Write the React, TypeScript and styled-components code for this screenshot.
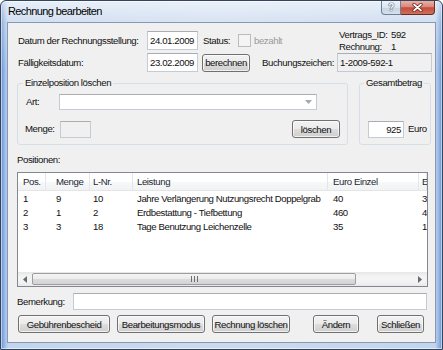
import styled, { createGlobalStyle } from "styled-components";

const GlobalStyle = createGlobalStyle`
  html, body {
    margin: 0;
    padding: 0;
    background: #ffffff;
  }
  body {
    font-family: "Liberation Sans", Arial, sans-serif;
  }
`;

const Window = styled.div`
  width: 443px;
  height: 350px;
  box-sizing: border-box;
  border: 1px solid #34445d;
  border-radius: 6px 6px 0 0;
  box-shadow: inset 0 0 0 1px rgba(255, 255, 255, 0.55);
  background:
    linear-gradient(to bottom, rgba(255, 255, 255, 0.6) 0, rgba(255, 255, 255, 0.25) 21px, rgba(255, 255, 255, 0) 70px),
    linear-gradient(to right, #5b8ed4 0, #92b4e1 3px, #c3d5ed 7px, #cbdbef 50%, #c3d5ed calc(100% - 7px), #92b4e1 calc(100% - 3px), #5b8ed4 100%);
  display: flex;
  flex-direction: column;
  overflow: hidden;
  font-size: 9.6px;
  letter-spacing: -0.4px;
  color: #111;
`;

const TitleBar = styled.div`
  height: 21px;
  display: flex;
  align-items: flex-start;
  padding: 0 7px 0 7px;
`;

const Title = styled.div`
  font-size: 11px;
  letter-spacing: -0.6px;
  line-height: 21px;
  color: #000;
`;

const CaptionButtons = styled.div`
  margin-left: auto;
  display: flex;
`;

const HelpButton = styled.div`
  width: 20px;
  height: 14px;
  box-sizing: border-box;
  border: 1px solid #6f7f96;
  border-top: none;
  border-radius: 0 0 0 4px;
  background: linear-gradient(to bottom, #eef3fa 0, #dbe4f0 50%, #c6d3e4 51%, #d6e0ec 100%);
  display: flex;
  align-items: center;
  justify-content: center;
  font-weight: bold;
  font-size: 10px;
  color: #ffffff;
  text-shadow: 0 0 1px #44546b, 0 0 1px #44546b, 0 0 1px #44546b;
`;

const CloseButton = styled.div`
  width: 34px;
  height: 14px;
  box-sizing: border-box;
  border: 1px solid #6a2c26;
  border-top: none;
  border-left: none;
  border-radius: 0 0 4px 0;
  background: linear-gradient(to bottom, #e9b2a6 0, #d9877a 45%, #c64b3b 52%, #d0705a 100%);
  display: flex;
  align-items: center;
  justify-content: center;
`;

const Client = styled.div`
  margin: 0 6px 6px 6px;
  flex: 1;
  box-sizing: border-box;
  border: 1px solid #8799b2;
  background: #f0f0f0;
  padding: 8px 3px 0 9px;
  display: flex;
  flex-direction: column;
`;

const FormRow = styled.div<{ $top?: number }>`
  display: flex;
  align-items: center;
  height: 19px;
  padding-left: 1px;
  margin-top: ${(p) => p.$top ?? 0}px;
`;

const Label = styled.div<{ $width?: number; $left?: number; $disabled?: boolean }>`
  width: ${(p) => (p.$width ? `${p.$width}px` : "auto")};
  margin-left: ${(p) => p.$left ?? 0}px;
  flex-shrink: 0;
  white-space: nowrap;
  line-height: 12px;
  color: ${(p) => (p.$disabled ? "#9a9a9a" : "inherit")};
`;

const TextBox = styled.div<{ $width: number; $height?: number; $gray?: boolean; $right?: boolean }>`
  width: ${(p) => p.$width}px;
  height: ${(p) => p.$height ?? 19}px;
  box-sizing: border-box;
  flex-shrink: 0;
  border: 1px solid #c5cbd4;
  border-top-color: #abadb3;
  background: ${(p) => (p.$gray ? "#f0f0f0" : "#ffffff")};
  padding: 0 2px;
  display: flex;
  align-items: center;
  justify-content: ${(p) => (p.$right ? "flex-end" : "flex-start")};
  white-space: nowrap;
  overflow: hidden;
`;

const Button = styled.div<{ $width: number; $left?: number }>`
  width: ${(p) => p.$width}px;
  height: 18px;
  margin-left: ${(p) => p.$left ?? 0}px;
  box-sizing: border-box;
  flex-shrink: 0;
  border: 1px solid #707070;
  border-radius: 3px;
  background: linear-gradient(to bottom, #f2f2f2 0, #ebebeb 49%, #dddddd 50%, #cfcfcf 100%);
  box-shadow: inset 0 0 0 1px rgba(255, 255, 255, 0.7);
  display: flex;
  align-items: center;
  justify-content: center;
  white-space: nowrap;
`;

const CheckBox = styled.div`
  width: 13px;
  height: 13px;
  box-sizing: border-box;
  border: 1px solid #bcbcbc;
  background: #f4f4f4;
  margin: 0 3px 0 0;
  flex-shrink: 0;
`;

const InfoBlock = styled.div`
  margin-left: auto;
  width: 93px;
  display: grid;
  grid-template-columns: 52px 1fr;
  line-height: 12px;
`;

const GroupRow = styled.div`
  display: flex;
  gap: 11px;
  margin-top: 5px;
`;

const Group = styled.fieldset<{ $width: number }>`
  width: ${(p) => p.$width}px;
  height: 68px;
  box-sizing: border-box;
  margin: 0;
  padding: 0 9px 7px 8px;
  min-width: 0;
  border: 1px solid #d5dfe5;
  border-radius: 3px;
`;

const GroupTitle = styled.legend<{ $shift: number }>`
  padding: 0 2px;
  margin-left: ${(p) => p.$shift}px;
  line-height: 12px;
`;

const GroupBody = styled.div`
  height: 49px;
  display: flex;
  flex-direction: column;
  justify-content: space-between;
`;

const GroupLine = styled.div<{ $top?: number }>`
  display: flex;
  align-items: center;
  height: 18px;
  margin-top: ${(p) => p.$top ?? 0}px;
`;

const Combo = styled.div`
  width: 258px;
  height: 16px;
  box-sizing: border-box;
  border: 1px solid #c5cbd4;
  border-top-color: #abadb3;
  background: #fff;
  display: flex;
  align-items: center;
  justify-content: flex-end;
  padding-right: 4px;
`;

const SectionLabel = styled.div`
  margin-top: 9px;
  line-height: 12px;
`;

const ListView = styled.div`
  margin-top: 6px;
  width: 411px;
  height: 115px;
  box-sizing: border-box;
  border: 1px solid #828790;
  background: #fff;
  display: flex;
  flex-direction: column;
  overflow: hidden;
`;

const HeaderRow = styled.div`
  display: flex;
  height: 17px;
  flex-shrink: 0;
  border-bottom: 1px solid #e5e5e5;
  background: linear-gradient(to bottom, #ffffff 0, #ffffff 50%, #f7f8fa 51%, #f1f2f4 100%);
`;

const HeaderCell = styled.div<{ $width: number; $pad: number }>`
  width: ${(p) => p.$width}px;
  flex-shrink: 0;
  box-sizing: border-box;
  padding-left: ${(p) => p.$pad}px;
  border-right: 1px solid #e3e6eb;
  display: flex;
  align-items: center;
  white-space: nowrap;
  color: #1e2633;
`;

const Rows = styled.div`
  flex: 1;
  display: flex;
  flex-direction: column;
`;

const DataRow = styled.div`
  display: flex;
  height: 14px;
  align-items: center;
`;

const DataCell = styled.div<{ $width: number; $pad: number }>`
  width: ${(p) => p.$width}px;
  flex-shrink: 0;
  box-sizing: border-box;
  padding-left: ${(p) => p.$pad}px;
  white-space: nowrap;
`;

const ScrollBar = styled.div`
  height: 14px;
  flex-shrink: 0;
  display: flex;
  align-items: stretch;
  background: linear-gradient(to bottom, #e6e6e6 0, #f3f3f3 30%, #f3f3f3 70%, #e9e9e9 100%);
`;

const ScrollArrow = styled.div`
  width: 14px;
  display: flex;
  align-items: center;
  justify-content: center;
  flex-shrink: 0;
`;

const ScrollThumb = styled.div`
  width: 324px;
  margin: 1px 0 1px 0;
  box-sizing: border-box;
  border: 1px solid #9d9d9d;
  border-radius: 2px;
  background: linear-gradient(to bottom, #f4f4f4 0, #ececec 50%, #dcdcdc 51%, #d3d3d3 100%);
  display: flex;
  align-items: center;
  justify-content: center;
`;

const ScrollRest = styled.div`
  flex: 1;
`;

const FooterRow = styled.div`
  display: flex;
  align-items: center;
  height: 17px;
  margin-top: 6px;
`;

const ButtonRow = styled.div`
  display: flex;
  align-items: center;
  gap: 7px;
  margin-top: 5px;
  padding-left: 1px;
`;

// last column is mostly hidden behind the list's right edge, only its first character shows
const columns = [
  { label: "Pos.", width: 28, pad: 5 },
  { label: "Menge", width: 44, pad: 10 },
  { label: "L-Nr.", width: 43, pad: 3 },
  { label: "Leistung", width: 195, pad: 4 },
  { label: "Euro Einzel", width: 91, pad: 5 },
  { label: "E", width: 8, pad: 3 },
];

const rows = [
  ["1", "9", "10", "Jahre Verlängerung Nutzungsrecht Doppelgrab", "40", "3"],
  ["2", "1", "2", "Erdbestattung - Tiefbettung", "460", "4"],
  ["3", "3", "18", "Tage Benutzung Leichenzelle", "35", "1"],
];

const CloseGlyph = () => (
  <svg width="11" height="9" viewBox="0 0 11 9">
    <path d="M2 1.5 L9 7.5 M9 1.5 L2 7.5" stroke="#5b2019" strokeWidth="3.2" strokeLinecap="round" />
    <path d="M2 1.5 L9 7.5 M9 1.5 L2 7.5" stroke="#ffffff" strokeWidth="1.7" strokeLinecap="round" />
  </svg>
);

const Arrow = ({ dir }: { dir: "left" | "right" | "down" }) => {
  if (dir === "down") {
    return (
      <svg width="7" height="4" viewBox="0 0 7 4">
        <path d="M0 0 L7 0 L3.5 4 Z" fill="#a8a8a8" />
      </svg>
    );
  }
  return (
    <svg width="4" height="7" viewBox="0 0 4 7">
      {dir === "left" ? <path d="M4 0 L4 7 L0 3.5 Z" fill="#6a6a6a" /> : <path d="M0 0 L0 7 L4 3.5 Z" fill="#6a6a6a" />}
    </svg>
  );
};

const Grip = () => (
  <svg width="7" height="6" viewBox="0 0 7 6">
    <path d="M0.5 0 V6 M3.5 0 V6 M6.5 0 V6" stroke="#6f6f6f" strokeWidth="1" />
  </svg>
);

export default function App() {
  return (
    <>
      <GlobalStyle />
      <Window>
        <TitleBar>
          <Title>Rechnung bearbeiten</Title>
          <CaptionButtons>
            <HelpButton>?</HelpButton>
            <CloseButton>
              <CloseGlyph />
            </CloseButton>
          </CaptionButtons>
        </TitleBar>
        <Client>
          <FormRow>
            <Label $width={129}>Datum der Rechnungsstellung:</Label>
            <TextBox $width={51}>24.01.2009</TextBox>
            <Label $width={35} $left={5}>Status:</Label>
            <CheckBox />
            <Label $disabled>bezahlt</Label>
            <InfoBlock>
              <span>Vertrags_ID:</span>
              <span>592</span>
              <span>Rechnung:</span>
              <span>1</span>
            </InfoBlock>
          </FormRow>
          <FormRow $top={3}>
            <Label $width={129}>Fälligkeitsdatum:</Label>
            <TextBox $width={51}>23.02.2009</TextBox>
            <Button $width={48} $left={4}>berechnen</Button>
            <Label $width={75} $left={12}>Buchungszeichen:</Label>
            <TextBox $width={95} $gray>1-2009-592-1</TextBox>
          </FormRow>
          <GroupRow>
            <Group $width={331}>
              <GroupTitle $shift={-3}>Einzelposition löschen</GroupTitle>
              <GroupBody>
                <GroupLine $top={4}>
                  <Label $width={33}>Art:</Label>
                  <Combo>
                    <Arrow dir="down" />
                  </Combo>
                </GroupLine>
                <GroupLine>
                  <Label $width={35} $left={-1}>Menge:</Label>
                  <TextBox $width={31} $height={17} $gray />
                  <Button $width={48} $left={201}>löschen</Button>
                </GroupLine>
              </GroupBody>
            </Group>
            <Group $width={72}>
              <GroupTitle $shift={-4}>Gesamtbetrag</GroupTitle>
              <GroupBody>
                <span />
                <GroupLine>
                  <TextBox $width={36} $height={17} $right>925</TextBox>
                  <Label $left={4}>Euro</Label>
                </GroupLine>
              </GroupBody>
            </Group>
          </GroupRow>
          <SectionLabel>Positionen:</SectionLabel>
          <ListView>
            <HeaderRow>
              {columns.map((c) => (
                <HeaderCell key={c.label} $width={c.width} $pad={c.pad}>
                  {c.label}
                </HeaderCell>
              ))}
            </HeaderRow>
            <Rows>
              {rows.map((r) => (
                <DataRow key={r[0]}>
                  {r.map((v, i) => (
                    <DataCell key={i} $width={columns[i].width} $pad={columns[i].pad}>
                      {v}
                    </DataCell>
                  ))}
                </DataRow>
              ))}
            </Rows>
            <ScrollBar>
              <ScrollArrow>
                <Arrow dir="left" />
              </ScrollArrow>
              <ScrollThumb>
                <Grip />
              </ScrollThumb>
              <ScrollRest />
              <ScrollArrow>
                <Arrow dir="right" />
              </ScrollArrow>
            </ScrollBar>
          </ListView>
          <FooterRow>
            <Label $width={56}>Bemerkung:</Label>
            <TextBox $width={354} $height={17} />
          </FooterRow>
          <ButtonRow>
            <Button $width={92}>Gebührenbescheid</Button>
            <Button $width={88}>Bearbeitungsmodus</Button>
            <Button $width={78}>Rechnung löschen</Button>
            <Button $width={46} $left={16}>Ändern</Button>
            <Button $width={47} $left={11}>Schließen</Button>
          </ButtonRow>
        </Client>
      </Window>
    </>
  );
}
